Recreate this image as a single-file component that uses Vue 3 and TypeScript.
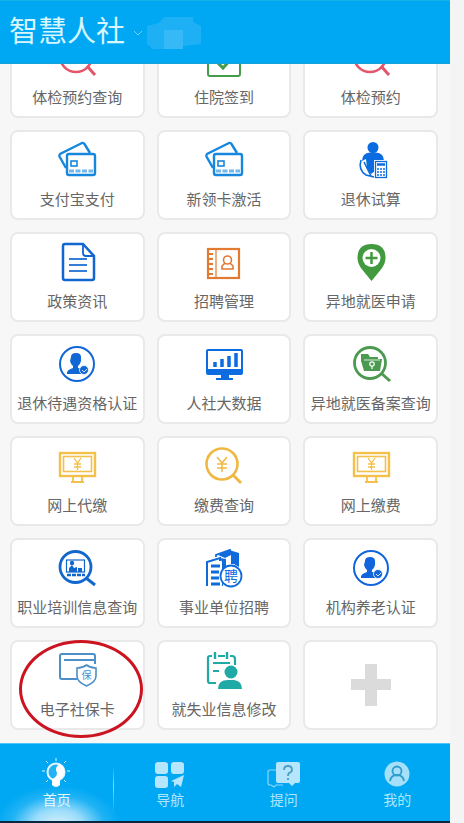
<script setup lang="ts">
interface Service {
  label: string
  icon: string
  color: string
  marked?: boolean
}

interface Tab {
  label: string
  icon: string
  active?: boolean
}

const icons: Record<string, string> = {
  magnifier: '<circle cx="19" cy="18" r="16" stroke-width="2.6"/><path d="M30 28l8 9" stroke-width="3"/>',
  payCard:
    '<path d="M9 28L2.500 16.500Q2 15 3 14L25 3Q26.500 2.500 27.500 4L33 13" stroke-width="2.400"/><rect x="10" y="14" width="28" height="21" rx="2" stroke-width="2.400"/><rect x="14" y="21" width="6" height="5" stroke-width="1.600"/><path d="M12 31h24" stroke-width="3" stroke-dasharray="5 1.500" opacity=".6"/>',
  verified:
    '<circle cx="20" cy="20" r="17" stroke-width="2"/><g fill="currentColor" stroke="none"><path d="M14 13q0-4 5-4t5 4v4q-1 4-3 5v2q7 1 9 3v3H10q-1-4 6-6v-2q-2-1-3-5z"/></g><circle cx="27" cy="26" r="4.500" fill="currentColor" stroke="#fff" stroke-width=".8"/><path d="M25 26l2 2 3-3" stroke="#fff" stroke-width=".8"/>',
  payScreen:
    '<rect x="3" y="7" width="35" height="23" stroke-width="2.400"/><rect x="6.500" y="10.500" width="28" height="15" stroke-width="1.600"/><path d="M16 30v6M25 30v6M14 36h13" stroke-width="1.800"/><path d="M17 12l3.500 5L24 12M20.500 17v7M17 18h7M17 21h7" stroke-width="1.300"/>',
  checkin: '<rect x="4" y="7" width="32" height="31" rx="2" stroke-width="2"/><path d="M12 23l7 7 10-11" stroke-width="3"/>',
  retire:
    '<g fill="currentColor" stroke="none"><circle cx="22" cy="7.500" r="5.500"/><path d="M11 21q0-8 8-8.500h6q8 .5 8 8.500h-9v10l-4 3-4-6-1-9z"/></g><path d="M10 20q-3 10 5 15l8 2M13 22q4 8 7 14" stroke-width="1.600"/><rect x="23" y="20" width="13" height="18" fill="#fff" stroke="none"/><rect x="24.500" y="21.500" width="11" height="16" stroke-width="1.300"/><path d="M26 24.500h8" stroke-width="2.500"/><path d="M26 29h8M26 32h8M26 35h8" stroke-width="1.800" stroke-dasharray="2 1" opacity=".75"/>',
  document:
    '<path d="M8 2h18l11 12v22q0 2-2 2H8q-2 0-2-2V4q0-2 2-2z" stroke-width="2.500"/><path d="M26 2v9q0 3 3 3h8" stroke-width="1.800"/><path d="M12 17h18M12 23h18M12 29h18" stroke-width="2" opacity=".85"/>',
  recruit:
    '<rect x="4" y="7" width="31" height="29" stroke-width="2.200"/><path d="M12 7v29" stroke-width="1.200"/><path d="M3 12h6M3 17h6M3 22h6M3 27h6M3 32h6" stroke-width="1.800"/><circle cx="23.500" cy="18" r="4" stroke-width="1.600"/><path d="M21 21l-3 3v3h11v-3l-3-3" stroke-width="1.600"/>',
  pin:
    '<path d="M20.500 2q14 0 14 14 0 6-5 12l-9 11-9-11q-5-6-5-12 0-14 14-14z" fill="currentColor" stroke="none"/><circle cx="20.500" cy="16" r="9" fill="#fff" stroke="none"/><path d="M14.500 16h12M20.500 10v12" stroke-width="2.500"/>',
  chart:
    '<rect x="3" y="6" width="35" height="24" rx="1" stroke-width="2"/><path d="M3 25h35v5H3z" fill="currentColor" stroke="none"/><path d="M11 18v5M18 15v8M25 12v11M32 9v14" stroke-width="3.500"/><path d="M17 30h8v4h4v2H12v-2h5z" fill="currentColor" stroke="none"/>',
  folderSearch:
    '<circle cx="19" cy="19" r="15.500" stroke-width="2.800"/><path d="M30 29l9 8" stroke-width="3"/><path d="M10 10h7l2 3h8v2h4l-2 12H13l-3-10z" fill="currentColor" stroke="none"/><path d="M13 16h16" stroke="#fff" stroke-width=".8"/><circle cx="21" cy="20" r="2.200" stroke="#fff" stroke-width="1.200"/><path d="M21 22v3" stroke="#fff" stroke-width="1.200"/>',
  feeSearch:
    '<circle cx="18" cy="18" r="15.500" stroke-width="2.600"/><path d="M29 29l8 8" stroke-width="3"/><path d="M13 11l5 6 5-6M18 17v9M13 18h10M13 22h10" stroke-width="1.500"/>',
  training:
    '<circle cx="18.500" cy="19" r="15.500" stroke-width="2.800"/><path d="M29 30l9 7" stroke-width="3"/><rect x="9.500" y="12" width="18" height="12" stroke-width="1.200"/><g fill="currentColor" stroke="none"><circle cx="15" cy="15" r="2.200"/><path d="M12 24v-4l3-3 2 3 3-1v5zM21 20h4v4h-4z"/></g><path d="M10 27h18" stroke-width="2.600" stroke-dasharray="4 1"/>',
  buildings:
    '<path d="M3 38V14l13-4v3" stroke-width="2"/><path d="M12 9V7l14-5 1 3" stroke-width="1.800"/><path d="M7 18h9M7 24h8M7 30h8M7 36h9" stroke-width="3.200"/><path d="M16 10l6 1v9l-3 3v15h-1V14z" fill="currentColor" stroke="none"/><path d="M14 7l11-5 10 3v14l-5-3h-3V7l-6 3z" fill="currentColor" stroke="none"/><circle cx="27" cy="28" r="10.500" fill="#fff" stroke-width="1.800"/><text x="27" y="33" font-size="14" text-anchor="middle" fill="currentColor" stroke="none">聘</text>',
  socialCard:
    '<path d="M20 29H5q-2 0-2-2V6q0-2 2-2h31q2 0 2 2v8" stroke-width="2"/><path d="M7 10h31" stroke-width="2"/><path d="M29.500 15q4 3 9.500 3v8q0 6-9.500 10-9.500-4-9.500-10v-8q5.500 0 9.500-3z" fill="#fff" stroke-width="1.600"/><text x="29.500" y="29" font-size="10" text-anchor="middle" fill="currentColor" stroke="none">保</text>',
  employment:
    '<path d="M12 33H6q-2 0-2-2V8q0-2 2-2h2M14 6h7M26 6h2q3 0 3 3v6" stroke-width="2.200"/><path d="M11 2v7M23 2v7" stroke-width="2.400"/><path d="M9 13h17M9 21h6" stroke-width="2"/><g fill="currentColor" stroke="none"><circle cx="27" cy="22" r="6.500"/><path d="M14 39q0-9 10-9h6q8 1 8 9z"/></g>',
}

const services: Service[] = [
  { label: '体检预约查询', icon: 'magnifier', color: '#e4556a' },
  { label: '住院签到', icon: 'checkin', color: '#459c4a' },
  { label: '体检预约', icon: 'magnifier', color: '#e4556a' },
  { label: '支付宝支付', icon: 'payCard', color: '#1687dd' },
  { label: '新领卡激活', icon: 'payCard', color: '#1687dd' },
  { label: '退休试算', icon: 'retire', color: '#0b6be0' },
  { label: '政策资讯', icon: 'document', color: '#1266cf' },
  { label: '招聘管理', icon: 'recruit', color: '#e27a32' },
  { label: '异地就医申请', icon: 'pin', color: '#429a3e' },
  { label: '退休待遇资格认证', icon: 'verified', color: '#1267d6' },
  { label: '人社大数据', icon: 'chart', color: '#0d6ce0' },
  { label: '异地就医备案查询', icon: 'folderSearch', color: '#4c9a50' },
  { label: '网上代缴', icon: 'payScreen', color: '#f3c04c' },
  { label: '缴费查询', icon: 'feeSearch', color: '#efb843' },
  { label: '网上缴费', icon: 'payScreen', color: '#f3c04c' },
  { label: '职业培训信息查询', icon: 'training', color: '#1267cd' },
  { label: '事业单位招聘', icon: 'buildings', color: '#0f6bdc' },
  { label: '机构养老认证', icon: 'verified', color: '#1265dc' },
  { label: '电子社保卡', icon: 'socialCard', color: '#4c8fc9', marked: true },
  { label: '就失业信息修改', icon: 'employment', color: '#20aaa6' },
]

const tabs: Tab[] = [
  {
    label: '首页',
    active: true,
    icon: '<circle cx="19" cy="14" r="8.500" fill="#22b2f5" stroke="#e6f8ff" stroke-width="2"/><path d="M23 6q5 3 4 9-1 4-4 7v5q-4 4-8 0v-6q5-2 5-6-3-6 3-9z" fill="#fff"/><path d="M19 0v3M9 3l2 2M29 3l-2 2M5 13h3M30 13h3M9 24l2-2M29 24l-2-2" stroke="#dff6ff" stroke-width="1"/>',
  },
  {
    label: '导航',
    icon: '<g fill="#b5e6fd"><rect x="5" y="4" width="13" height="12" rx="3"/><rect x="21" y="4" width="13" height="12" rx="3"/><rect x="5" y="18" width="13" height="12" rx="3"/><path d="M34 17l-3 12-4-3-3 3v-5l-3-1z"/></g>',
  },
  {
    label: '提问',
    icon: '<path d="M12 12H6q-2 0-2 2v11q0 2 2 2h1l3 2 2-2h7" fill="none" stroke="#8bd6fa" stroke-width="1.200"/><path d="M14 4h20q2 0 2 2v17q0 2-2 2h-3l-3 3-3-3H14q-2 0-2-2V6q0-2 2-2z" fill="#b5e6fd"/><path d="M20 12q0-4 4-4t4 4q0 2-3 3-1 1-1 3M24 20v2" fill="none" stroke="#4a9fc4" stroke-width="1.800"/>',
  },
  {
    label: '我的',
    icon: '<circle cx="20" cy="16" r="12.500" fill="#a5e0fa"/><circle cx="20" cy="13" r="4.500" fill="none" stroke="#2f9cc9" stroke-width="1.800"/><path d="M13 23q1-6 7-6t7 6" fill="none" stroke="#2f9cc9" stroke-width="1.800"/>',
  },
]
</script>

<template>
  <div class="page">
    <div class="app">
      <header class="header">
        <h1 class="title">智慧人社</h1>
        <button class="picker" type="button" aria-label="地区">
          <svg class="chevron" viewBox="0 0 10 6" aria-hidden="true">
            <path d="M1 1l4 4 4-4" fill="none" stroke="currentColor" stroke-width="1" />
          </svg>
          <svg class="region" viewBox="0 0 54 32" aria-hidden="true">
            <path d="M0 9l12-3 5-6h29v5l8 4v18l-18 2v3H6l-6-5z" fill="#1eb0f5" />
            <path d="M17 13h19v19H17z" fill="#36b9f6" />
          </svg>
        </button>
      </header>

      <main class="content">
        <div class="grid">
          <a v-for="item in services" :key="item.label" class="card" href="#">
            <svg class="icon" viewBox="0 0 40 40" :style="{ color: item.color }" aria-hidden="true" v-html="icons[item.icon]"></svg>
            <span class="label">{{ item.label }}</span>
            <span v-if="item.marked" class="mark"></span>
          </a>
          <button class="card add" type="button" aria-label="添加">
            <svg class="plus" viewBox="0 0 40 42" aria-hidden="true">
              <path d="M14 0h12v15h14v11H26v16H14V26H0V15h14z" fill="#dbdbdb" />
            </svg>
          </button>
        </div>
      </main>

      <nav class="nav">
        <div class="tabs">
          <a v-for="tab in tabs" :key="tab.label" class="tab" :class="{ active: tab.active }" href="#">
            <svg class="tab-icon" viewBox="0 0 40 30" aria-hidden="true" v-html="tab.icon"></svg>
            <span class="tab-label">{{ tab.label }}</span>
          </a>
        </div>
      </nav>
    </div>
  </div>
</template>

<style>
body {
  background: #f4f4f4;
}
</style>

<style scoped>
.page {
  padding-right: 14px;
  font-family: 'Noto Sans CJK SC', sans-serif;
}

.app {
  display: flex;
  flex-direction: column;
  height: 100vh;
  background: #f7f7f7;
}

.header {
  display: flex;
  align-items: center;
  flex: none;
  height: 64px;
  box-sizing: border-box;
  padding: 0 9px 6px;
  background: #00a8f3;
  border-top: 1px solid #16b3e6;
  border-bottom: 1px solid #16a0d8;
}

.title {
  margin: 0;
  font-size: 29px;
  font-weight: 400;
  line-height: 40px;
  color: #d8f6ff;
}

.picker {
  display: flex;
  align-items: center;
  gap: 4px;
  margin-left: 8px;
  padding: 8px 0 0;
  border: 0;
  background: none;
  color: #6fd0fa;
}

.chevron {
  width: 10px;
  height: 6px;
}

.region {
  width: 54px;
  height: 32px;
}

.content {
  display: flex;
  flex: 1;
  flex-direction: column;
  justify-content: flex-end;
  min-height: 0;
  overflow: hidden;
  padding: 0 12px 13px 10px;
}

.grid {
  display: grid;
  flex: none;
  grid-template-columns: repeat(3, 1fr);
  grid-auto-rows: 90px;
  gap: 12px;
}

.card {
  position: relative;
  display: flex;
  flex-direction: column;
  align-items: center;
  box-sizing: border-box;
  padding: 8px 0 0;
  border: 2px solid #e9e9e9;
  border-radius: 8px;
  background: #fff;
  color: #666;
  text-decoration: none;
}

.icon {
  flex: none;
  width: 40px;
  height: 40px;
  fill: none;
  stroke: currentColor;
}

.label {
  margin-top: 9px;
  font-size: 15px;
  line-height: 20px;
  white-space: nowrap;
}

.mark {
  position: absolute;
  top: -2px;
  left: 7px;
  width: 124px;
  height: 98px;
  box-sizing: border-box;
  border: 3px solid #cc1420;
  border-radius: 50%;
}

.add {
  justify-content: center;
  padding: 0;
}

.plus {
  width: 40px;
  height: 42px;
}

.nav {
  flex: none;
  overflow: hidden;
  border-top: 1px solid #4fc4f7;
  border-bottom: 2px solid #0b2740;
  background:
    linear-gradient(transparent, #8bd8fa 40%, transparent) 113px 22px / 1px 48px no-repeat,
    radial-gradient(ellipse 62px 40px at 58px 106%, #d8f2fd, #9bdcfa 40%, rgba(80, 195, 247, 0.4) 75%, transparent),
    #00a8f3;
}

.tabs {
  display: grid;
  grid-template-columns: repeat(4, 1fr);
  margin-right: -4px;
  padding: 14px 0 14px;
}

.tab {
  display: flex;
  flex-direction: column;
  align-items: center;
  gap: 3px;
  color: #b0e5fd;
  text-decoration: none;
}

.active {
  color: #e2f7ff;
}

.tab-icon {
  width: 40px;
  height: 30px;
}

.tab-label {
  font-size: 14px;
  line-height: 16px;
}
</style>
